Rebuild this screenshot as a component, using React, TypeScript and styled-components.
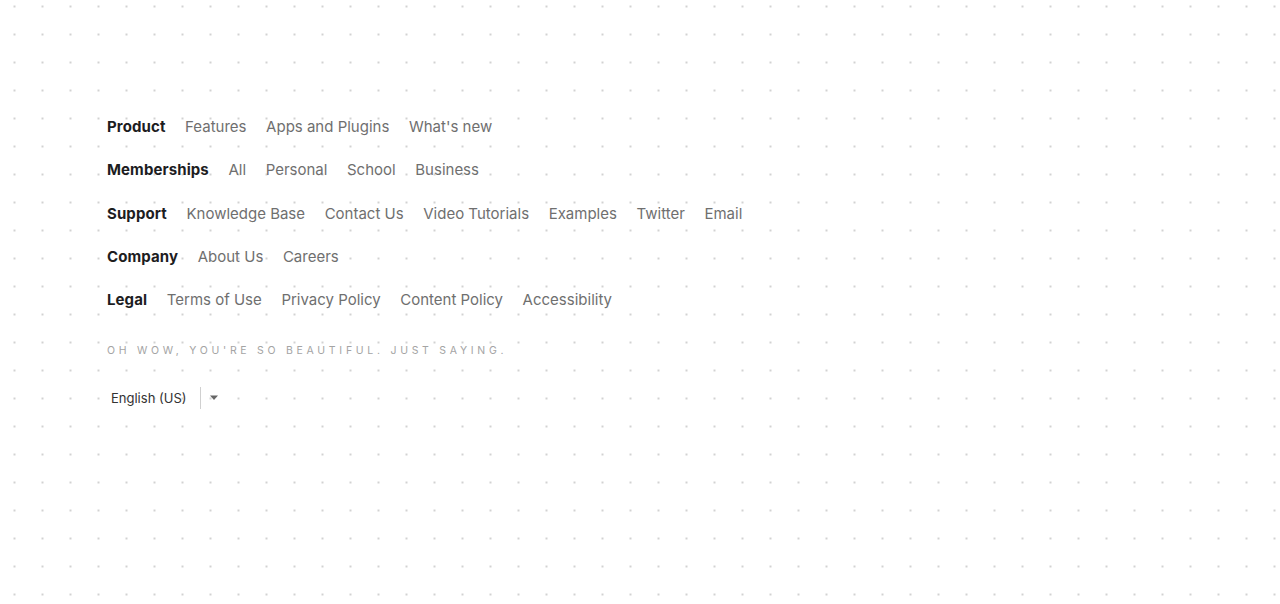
import React from 'react';
import styled, { createGlobalStyle } from 'styled-components';

const GlobalStyle = createGlobalStyle`
  html, body {
    margin: 0;
    padding: 0;
    background: #fff;
  }
  body {
    font-family: Inter, "Noto Sans", sans-serif;
    -webkit-font-smoothing: antialiased;
  }
`;

interface Section {
  title: string;
  links: string[];
}

const sections: Section[] = [
  { title: 'Product', links: ['Features', 'Apps and Plugins', "What's new"] },
  { title: 'Memberships', links: ['All', 'Personal', 'School', 'Business'] },
  {
    title: 'Support',
    links: ['Knowledge Base', 'Contact Us', 'Video Tutorials', 'Examples', 'Twitter', 'Email'],
  },
  { title: 'Company', links: ['About Us', 'Careers'] },
  { title: 'Legal', links: ['Terms of Use', 'Privacy Policy', 'Content Policy', 'Accessibility'] },
];

const App: React.FC = () => (
  <Page>
    <GlobalStyle />
    <Footer>
      <Nav>
        {sections.map((s) => (
          <Row key={s.title}>
            <RowTitle>{s.title}</RowTitle>
            {s.links.map((l) => (
              <RowLink key={l} href="#">
                {l}
              </RowLink>
            ))}
          </Row>
        ))}
      </Nav>
      <Tagline>Oh wow, you're so beautiful. Just saying.</Tagline>
      <LangSelect>
        <LangLabel>English (US)</LangLabel>
        <LangDivider />
        <Caret viewBox="0 0 10 6" width="10" height="6">
          <path d="M1 0.5h8L5 5z" fill="#666" />
        </Caret>
      </LangSelect>
    </Footer>
  </Page>
);

const Page = styled('div')`
  width: 1280px;
  height: 604px;
  overflow: hidden;
  background-color: #fff;
  background-image: radial-gradient(circle, #d2d2d2 1px, transparent 1.3px);
  background-size: 28px 28px;
  background-position: 0.5px -7.5px;
`;

const Footer = styled('footer')`
  padding: 118px 0 0 107px;
  display: flex;
  flex-direction: column;
  align-items: flex-start;
`;

const Nav = styled('nav')`
  display: flex;
  flex-direction: column;
  gap: 25.25px;
`;

const Row = styled('div')`
  display: flex;
  align-items: baseline;
  gap: 19.6px;
  height: 18px;
  font-size: 15px;
  line-height: 18px;
`;

const RowTitle = styled('span')`
  font-weight: 700;
  color: #1d1d1f;
  letter-spacing: 0.1px;
`;

const RowLink = styled('a')`
  color: #6f6f6f;
  text-decoration: none;
`;

const Tagline = styled('div')`
  margin-top: 35px;
  font-size: 10.5px;
  line-height: 13px;
  letter-spacing: 3.72px;
  text-transform: uppercase;
  color: #a4a4a4;
`;

const LangSelect = styled('div')`
  margin-top: 30px;
  margin-left: 4px;
  display: flex;
  align-items: center;
  height: 22px;
`;

const LangLabel = styled('span')`
  font-size: 13px;
  color: #333;
`;

const LangDivider = styled('span')`
  width: 1px;
  height: 22px;
  background: #d0d0d0;
  margin: 0 8px 0 14px;
`;

const Caret = styled('svg')`
  display: block;
`;

export default App;
